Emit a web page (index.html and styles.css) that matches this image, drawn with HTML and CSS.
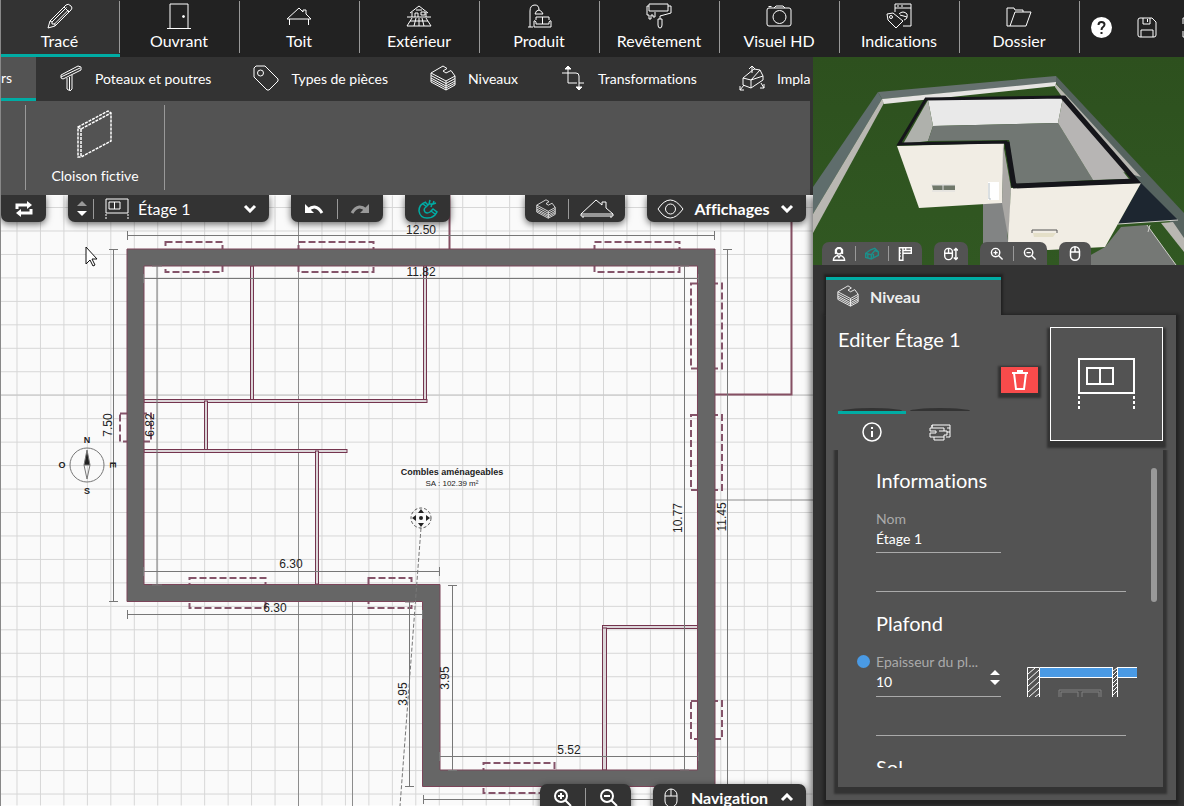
FILE: index.html
```html
<!DOCTYPE html>
<html lang="fr">
<head>
  <meta charset="UTF-8" />
  <meta name="viewport" content="width=device-width, initial-scale=1.0" />
  <title>Plan - Étage 1</title>
  <link rel="stylesheet" href="styles.css">
</head>
<body>
  <!-- shared icons -->
  <svg class="sprite" aria-hidden="true">
    <symbol id="i-levels" viewBox="0 0 26 26">
      <path d="M1 8L13 1L17 3.500L13 6L16 8L21 5.500L25 11V20L16 25L1 17ZM1 8L16 16L25 11M16 16V25M1 10.500L16 18.500L25 13.500M1 13L16 21L25 16M1 15L16 23L25 18" />
    </symbol>
    <symbol id="i-floor" viewBox="0 0 24 22">
      <path d="M1 1H23V15H1ZM4 4H15V11H4ZM9.500 4V11" />
      <path d="M1 16V22M23 16V22" stroke-dasharray="2 1" />
    </symbol>
    <symbol id="i-mouse" viewBox="0 0 16 20">
      <rect x="2" y="1" width="12" height="18" rx="6" />
      <path d="M2 8H14M8 1V8" />
    </symbol>
    <symbol id="i-zoom-in" viewBox="0 0 20 20">
      <circle cx="8" cy="8" r="6" />
      <path d="M12.500 12.500L18 18M5 8H11M8 5V11" />
    </symbol>
    <symbol id="i-zoom-out" viewBox="0 0 20 20">
      <circle cx="8" cy="8" r="6" />
      <path d="M12.500 12.500L18 18M5 8H11" />
    </symbol>
  </svg>

  <header class="topbar">
    <nav class="tabs">
      <button class="tab active">
        <svg width="26" height="26" viewBox="0 0 26 26"><path d="M1 25L3 18L19 2Q21 0 24 3Q26 5 24 7L8 23ZM3 18L5 19L5 21L8 21L8 23M17 4L22 9M5 19L19.500 4.500M7.500 21L21.500 7" /></svg>
        Tracé
      </button>
      <button class="tab">
        <svg width="26" height="26" viewBox="0 0 26 26"><path d="M4 25V1H22V25M1 25.500H25" /><circle cx="17.500" cy="13.500" r="1" fill="#fff" /></svg>
        Ouvrant
      </button>
      <button class="tab">
        <svg width="26" height="26" viewBox="0 0 26 26"><path d="M1 16L13 5L17 9V7H20V11L25 16H1M3.500 16V22M22.500 16V22" /></svg>
        Toit
      </button>
      <button class="tab">
        <svg width="26" height="26" viewBox="0 0 26 26"><path d="M4 10L13 3L22 10M6 9V14M20 9V14M1 14H25M9 14V10H12V14M15 9H19V12H15ZM10 7H16M6 15L1 23H25L20 15M10 15L8 23M13 15V23M16 15L18 23M4 18H22" /></svg>
        Extérieur
      </button>
      <button class="tab">
        <svg width="26" height="26" viewBox="0 0 26 26"><path d="M4 24V8Q4 2 9 2Q13 2 13 7M2 24H7M9 11Q10 7 13 7Q16 8 17 11ZM8 18V24H25V18Q24 17 23 19V21H10V19Q9 17 8 18M10 17V14H23V17M16.500 14V21" /></svg>
        Produit
      </button>
      <button class="tab">
        <svg width="26" height="26" viewBox="0 0 26 26"><path d="M3 1H22V8H3ZM3 3H1V12H3V16H5V12H7V14H9V9M22 3H25V10L14 13V16M12 16H16V22Q16 25 14 25Q12 25 12 22Z" /></svg>
        Revêtement
      </button>
      <button class="tab">
        <svg width="26" height="26" viewBox="0 0 26 26"><rect x="1" y="5" width="24" height="18" rx="2" /><path d="M8 5L10 3H17L19 5M2.500 3.500H5.500" /><circle cx="13.500" cy="14" r="6.500" /></svg>
        Visuel HD
      </button>
      <button class="tab">
        <svg width="26" height="26" viewBox="0 0 26 26"><path d="M9 9V1H25V23H17M9 5H25M11 3H13M15 3H17M1 11L7 10L17 18L10 25L2 17Z" /><circle cx="5" cy="14" r="1.500" /><path d="M13 11Q17 7 21 11Q22 16 18 17M14 12L21 14" /></svg>
        Indications
      </button>
      <button class="tab">
        <svg width="26" height="26" viewBox="0 0 26 26"><path d="M4 23H1V5H8L9 7H17V9M4 23H20L25 9H9L4 23Z" /></svg>
        Dossier
      </button>
    </nav>
    <div class="tools">
      <button aria-label="Aide"><svg width="21" height="21" viewBox="0 0 21 21"><circle cx="10.500" cy="10.500" r="10.500" fill="#fff" stroke="none" /><path d="M7.500 8Q7.500 5 10.500 5Q13.500 5 13.500 7.500Q13.500 9 12 10Q10.500 11 10.500 13M10.500 15V17" stroke="#222" stroke-width="2" /></svg></button>
      <button aria-label="Enregistrer"><svg width="20" height="21" viewBox="0 0 20 21"><path d="M1 3Q1 1 3 1H15L19 5V18Q19 20 17 20H3Q1 20 1 18ZM6 1V7H13V1M10.500 2V5M4 20V13H16V20" /></svg></button>
      <button aria-label="Plein écran"><svg width="21" height="21" viewBox="0 0 21 21"><path d="M7 1H1V7M1 14V20H7M14 1H20V7M20 14V20H14" /></svg></button>
    </div>
  </header>

  <div class="workspace">
    <main class="editor">
      <nav class="subnav">
        <button class="sub active">rs</button>
        <button class="sub">
          <svg width="26" height="26" viewBox="0 0 26 26"><path d="M4 10L21 1L24 2V5L6 14L4 13ZM4 12L23 3M10 13V24L13 26L15 24V10M12.500 12V25" /></svg>
          Poteaux et poutres
        </button>
        <button class="sub">
          <svg width="26" height="26" viewBox="0 0 26 26"><path d="M1 3L3 1L12 1L25 14V16L16 25H14L1 12Z" /><circle cx="7.500" cy="8" r="3" /></svg>
          Types de pièces
        </button>
        <button class="sub">
          <svg width="26" height="26"><use href="#i-levels" /></svg>
          Niveaux
        </button>
        <button class="sub">
          <svg width="26" height="26" viewBox="0 0 26 26"><path d="M8 1V18H17M2 8H16Q19 8 19 11V24M19 18H24" /><path d="M5 4L8 1L11 4ZM16 22L19 25L22 22Z" fill="#fff" /></svg>
          Transformations
        </button>
        <button class="sub">
          <svg width="26" height="26" viewBox="0 0 26 26"><path d="M4 13L15 4L21 5L24 11V15L12 23L4 20ZM4 13L12 15V23M12 15L21 5M12 15L24 11M13 8V1M10 4L13 1L16 4M5 20L1 25M1 21V25H5M22 18L25 23M25 19V23H21" /></svg>
          Impla
        </button>
      </nav>

      <div class="ribbon">
        <button class="ribbon-item">
          <svg width="36" height="48" viewBox="0 0 36 48"><path d="M1 17L31 1L34 3V31L4 47H1ZM1 17L4 19L34 3M4 19V47" stroke-width="1.500" stroke-dasharray="3 1" /></svg>
          Cloison fictive
        </button>
      </div>

      <section class="canvas">
        <svg class="plan" viewBox="1 195 812 611" preserveAspectRatio="xMinYMin slice">
          <defs>
            <pattern id="grid" x="16.500" y="230.500" width="23.460" height="23.460" patternUnits="userSpaceOnUse">
              <path d="M0 0H24M0 0V24" stroke="#d6d6d6" stroke-width="2" />
            </pattern>
          </defs>
          <rect x="0" y="195" width="813" height="611" fill="#fafafa" />
          <rect x="0" y="195" width="813" height="611" fill="url(#grid)" />
          <g class="axes">
            <path d="M298.500 195V806M352.500 602V806M715 500H813" />
            <path d="M0 395H813" stroke="#c4c4c4" />
          </g>
          <path class="lot" d="M449.500 195V249M791.500 195V394.500H715" />

          <!-- openings, hidden in part by the walls -->
          <g class="openings">
            <rect x="165.500" y="242" width="57" height="30" />
            <rect x="298.500" y="242" width="75" height="30" />
            <rect x="594.500" y="242" width="85" height="30" />
            <rect x="691" y="283.500" width="31" height="85" />
            <rect x="691" y="415" width="31" height="75" />
            <rect x="691" y="701" width="31" height="38" />
            <rect x="189.500" y="578" width="76" height="30" />
            <rect x="368.500" y="578" width="43" height="30" />
            <rect x="483.500" y="763" width="71" height="30" />
            <rect x="120" y="413.500" width="31" height="28" />
          </g>

          <g class="partitions">
            <rect x="250.500" y="266" width="3" height="135" />
            <rect x="423.500" y="266" width="3" height="135" />
            <rect x="144" y="399.500" width="283" height="3" />
            <rect x="204.500" y="401" width="3" height="50" />
            <rect x="144" y="449.500" width="203" height="3" />
            <rect x="315.500" y="451" width="3" height="133" />
            <rect x="602.500" y="625.500" width="96" height="3" />
            <rect x="602.500" y="628" width="4" height="142" />
          </g>

          <path class="walls" fill-rule="evenodd" d="M127 249H715V786.500H422.500V601.500H127ZM144 266V584.500H440V770H697.500V266Z" />

          <g class="dims">
            <path d="M127.500 231V240M127 235.500H715M714.500 231V240" />
            <path d="M143.500 274V283M144 278.500H698M698.500 274V283" />
            <path d="M109 249.500H118M113.500 249V601M109 601.500H118" />
            <path d="M152 266H162M157 266V585M152 585H162" />
            <path d="M143.500 567V576M144 571.500H439M439.500 567V576" />
            <path d="M127.500 610V619M127 614.500H422M422.500 610V619" />
            <path d="M448 585.500H457M452.500 585V770M448 770.500H457" />
            <path d="M405 602H414M409.500 602V786M405 786.500H414" />
            <path d="M680 266H689M684.500 266V770M680 770H689" />
            <path d="M723 249.500H732M727.500 249V806" />
            <path d="M439.500 752V761M439 756.500H698M698.500 752V761" />
            <path d="M423.500 795V804M423 799.500H715" />
          </g>
          <path d="M421 528L400 806" stroke="#777" stroke-dasharray="4 2" />

          <g class="measure">
            <text x="421" y="234">12.50</text>
            <text x="421" y="276">11.82</text>
            <text x="291" y="568">6.30</text>
            <text x="275" y="612">6.30</text>
            <text x="569" y="754">5.52</text>
            <text transform="translate(112 425) rotate(-90)">7.50</text>
            <text transform="translate(154 425) rotate(-90)">6.82</text>
            <text transform="translate(682 518) rotate(-90)">10.77</text>
            <text transform="translate(726 517) rotate(-90)">11.45</text>
            <text transform="translate(449 678) rotate(-90)">3.95</text>
            <text transform="translate(407 694) rotate(-90)">3.95</text>
          </g>
          <text class="room" x="452" y="475">Combles aménageables</text>
          <text class="area" x="452" y="486">SA : 102.39 m²</text>

          <g class="move">
            <circle cx="421" cy="518" r="10" fill="none" stroke="#555" stroke-dasharray="3 2" />
            <circle cx="421" cy="518" r="2" />
            <path d="M421 509L424 513H418ZM421 527L424 523H418ZM412 518L416 515V521ZM430 518L426 515V521Z" />
          </g>

          <g class="compass">
            <circle cx="87" cy="465" r="17" />
            <path d="M87 450L90 465H84Z" fill="#222" />
            <path d="M84 465L87 479L90 465" />
            <text x="87" y="443">N</text>
            <text x="87" y="494">S</text>
            <text x="62" y="468">O</text>
            <text transform="translate(110 465) rotate(90)">E</text>
          </g>
          <path d="M86 247V264L90 260L93 266L95 265L92 259H97Z" fill="#fff" stroke="#111" />
        </svg>

        <div class="bar bar-top">
          <div class="group swap">
            <button aria-label="Inverser"><svg width="18" height="18" viewBox="0 0 18 18" class="bold"><path d="M2 9V5H13M16 9V13H5" /><path d="M12 1L17 5L12 9ZM6 9L1 13L6 17Z" fill="#fff" stroke="none" /></svg></button>
          </div>
          <div class="group level">
            <button class="updown" aria-label="Changer de niveau"><svg width="10" height="17" viewBox="0 0 10 17"><path d="M0 6L5 1L10 6Z" fill="#999" stroke="none" /><path d="M0 11L5 16L10 11Z" fill="#fff" stroke="none" /></svg></button>
            <i class="sep"></i>
            <svg width="24" height="22"><use href="#i-floor" /></svg>
            <select aria-label="Niveau"><option>Étage 1</option></select>
            <svg class="chevron" width="14" height="9" viewBox="0 0 14 9"><path d="M2 2L7 7L12 2" /></svg>
          </div>
          <div class="group history">
            <button aria-label="Annuler"><svg width="20" height="12" viewBox="0 0 20 12"><path d="M4 7Q12 0 18 10" fill="none" stroke-width="3" /><path d="M1 1V10H10Z" fill="#fff" stroke="none" /></svg></button>
            <i class="sep"></i>
            <button aria-label="Rétablir" class="off"><svg width="20" height="12" viewBox="0 0 20 12"><path d="M16 7Q8 0 2 10" fill="none" stroke-width="3" /><path d="M19 1V10H10Z" fill="#fff" stroke="none" /></svg></button>
          </div>
          <div class="group magnet">
            <button aria-label="Magnétisme"><svg width="20" height="20" viewBox="0 0 20 20"><path d="M8 3Q1 5 1 12Q2 19 9 19Q14 19 17 16L19 13L15 10L12 13Q9 15 7 13Q5 10 8 8L10 6L7 3M5 5L9 8M13 12L17 15M12 1L11 5H14L13 8M16 2L15 5L18 4" /></svg></button>
          </div>
          <div class="group views">
            <button aria-label="Niveaux"><svg width="20" height="20"><use href="#i-levels" /></svg></button>
            <i class="sep"></i>
            <button aria-label="Toiture"><svg width="34" height="20" viewBox="0 0 34 20"><path d="M1 15L16 1L22 6V3H26V9L33 15V17H1V15H33M3 17V19M31 17V19" /></svg></button>
          </div>
          <button class="group menu">
            <svg width="27" height="20" viewBox="0 0 27 20"><path d="M1 10Q13 -8 26 10Q13 28 1 10Z" /><circle cx="13.500" cy="10" r="5" /></svg>
            Affichages
            <svg class="chevron" width="14" height="9" viewBox="0 0 14 9"><path d="M2 2L7 7L12 2" /></svg>
          </button>
        </div>

        <div class="bar bar-bottom">
          <div class="group zoom">
            <button aria-label="Zoom avant"><svg width="20" height="20"><use href="#i-zoom-in" /></svg></button>
            <i class="sep"></i>
            <button aria-label="Zoom arrière"><svg width="20" height="20"><use href="#i-zoom-out" /></svg></button>
          </div>
          <button class="group menu navigation">
            <svg width="16" height="20"><use href="#i-mouse" /></svg>
            Navigation
            <svg class="chevron" width="14" height="9" viewBox="0 0 14 9"><path d="M2 7L7 2L12 7" /></svg>
          </button>
        </div>
      </section>
    </main>

    <aside class="side">
      <section class="view3d">
        <svg class="scene" viewBox="0 0 371 208" preserveAspectRatio="xMidYMin slice">
          <defs>
            <linearGradient id="grass" x1="0" y1="0" x2="0" y2="1">
              <stop offset="0" stop-color="#2d501e" />
              <stop offset="1" stop-color="#315822" />
            </linearGradient>
          </defs>
          <rect width="371" height="208" fill="url(#grass)" />
          <!-- fence -->
          <path d="M65 35L0 130V157L69 42Z" fill="#5f6d6c" />
          <path d="M69 42L0 157V176L71 46Z" fill="#b9b7b2" />
          <path d="M65 35L243 19V26L69 42Z" fill="#66716f" />
          <path d="M69 42L243 25V29L71 47Z" fill="#e6e4e2" />
          <path d="M243 19L371 156V182L243 26Z" fill="#56635f" />
          <path d="M242 26L328 120L300 112L242 30Z" fill="#b7b6b0" />
          <path d="M348 166L360 165L371 181V195Z" fill="#b9b7b2" />
          <!-- terrace and porch roof -->
          <path d="M308 170L334 168L363 208H260L292 190Z" fill="#757875" />
          <path d="M328 126L365 163L305 167Z" fill="#1d2630" />
          <path d="M365 163L305 167M337 168L335 175M334 168L363 208" fill="none" stroke="#cfcfca" />
          <path d="M170 146H192L197 208H170Z" fill="#828484" />
          <!-- house -->
          <path d="M84 89L191 86L189 146L106 151Z" fill="#f1ede4" />
          <path d="M190 86L198 131L196 185L189 146Z" fill="#a9a7a4" />
          <path d="M198 131L328 126L292 190L235 193L195 185Z" fill="#f1ede4" />
          <path d="M115 43L250 40L245 66L120 69Z" fill="#e9e9e9" />
          <path d="M115 43L120 69L115 84L90 87Z" fill="#afb1ac" />
          <path d="M120 69L245 66L280 123L202 127L196 83L115 84Z" fill="#717773" />
          <path d="M250 40L316 122L280 123L245 66Z" fill="#b7b5b4" />
          <path d="M86 87L113 42L250 40L323 124L200 129L193 85Z" fill="none" stroke="#15151a" stroke-width="3" />
          <path d="M194 85L201 129M250 40L323 124L200 129" fill="none" stroke="#15151a" stroke-width="5" />
          <path d="M119 128H142V133H120Z" fill="#70786a" />
          <path d="M118 128H142M119 134H142M130 127V134" stroke="#ddd" fill="none" />
          <path d="M175 125H186V143H175Z" fill="#fff" />
          <path d="M176 126V142H178" fill="none" stroke="#b5bfc4" />
          <path d="M219 176V173H244V176" fill="none" stroke="#555" />
          <path d="M220 176H243L240 180H221Z" fill="#e4dfc8" />
        </svg>
        <div class="bar3d">
          <div class="group3d">
            <button aria-label="Visite"><svg width="14" height="14" viewBox="0 0 20 20"><circle cx="10" cy="6" r="4" /><path d="M5 10V4Q10 -3 15 4V10M2 19Q2 14 8 12L10 15L12 12Q18 14 18 19Z" /></svg></button>
            <i class="sep"></i>
            <button aria-label="Vue 3D" class="on"><svg width="14" height="14" viewBox="0 0 20 20"><path d="M1 9L8 4L14 2L19 7V12L9 17L1 15ZM1 9L9 11V17M9 11L14 5L19 7M12 16V10M4 10V15" /></svg></button>
            <i class="sep"></i>
            <button aria-label="Vue 2D"><svg width="14" height="14" viewBox="0 0 20 20"><path d="M2 1H7V19H2ZM7 1H19V9H7M11 1V5H19M7 5H11M2 5H4M2 9H4M2 13H4" /></svg></button>
          </div>
          <div class="group3d">
            <button aria-label="Hauteur"><svg width="14" height="14" viewBox="0 0 20 20"><rect x="1" y="2" width="11" height="16" rx="5" /><path d="M1 9H12M6.500 2V9M17 2V18M14 5L17 2L20 5M14 15L17 18L20 15" /></svg></button>
          </div>
          <div class="group3d">
            <button aria-label="Zoom avant"><svg width="14" height="14"><use href="#i-zoom-in" /></svg></button>
            <i class="sep"></i>
            <button aria-label="Zoom arrière"><svg width="14" height="14"><use href="#i-zoom-out" /></svg></button>
          </div>
          <div class="group3d">
            <button aria-label="Souris"><svg width="12" height="15"><use href="#i-mouse" /></svg></button>
          </div>
        </div>
      </section>

      <section class="panel">
        <h1 class="panel-tab"><svg width="22" height="22"><use href="#i-levels" /></svg>Niveau</h1>
        <div class="panel-body">
          <div class="panel-head">
            <div class="head-left">
              <h2>Editer Étage 1</h2>
              <button class="delete" aria-label="Supprimer"><svg width="18" height="20" viewBox="0 0 18 20"><path d="M1 3H17M6 1H12M3 3L5 19H13L15 3" /></svg></button>
              <div class="prop-tabs">
                <button class="active" aria-label="Informations"><svg width="20" height="20" viewBox="0 0 20 20"><circle cx="10" cy="10" r="9" stroke-width="1.500" /><path d="M10 9V15M10 5V7" stroke-width="2" /></svg></button>
                <button aria-label="Structure"><svg width="22" height="18" viewBox="0 0 22 18"><path d="M3 4V2H21V14H17M1 5H15V8H18V12H15V14H1V10H5M1 5V8H7V10H5M10 8H15M5 14V17H15V14M3 2V5M18 5H21M18 9H21" /></svg></button>
              </div>
            </div>
            <div class="thumb"><svg width="58" height="52" viewBox="0 0 58 52"><path d="M1 1H56V35H1ZM9 10H35V26H9ZM22 10V26" /><path d="M1 38V52M56 38V52" stroke-dasharray="3 2" /></svg></div>
          </div>

          <div class="props">
            <form class="fields">
              <h3>Informations</h3>
              <div class="field">
                <label for="nom">Nom</label>
                <input id="nom" type="text" value="Étage 1">
              </div>
              <hr>
              <h3>Plafond</h3>
              <div class="row">
                <div class="field marked">
                  <label for="plafond">Epaisseur du pl...</label>
                  <input id="plafond" type="number" value="10">
                  <svg class="spin" width="12" height="17" viewBox="0 0 12 17"><path d="M1 6L6 1L11 6ZM1 11L6 16L11 11Z" fill="#fff" stroke="none" /></svg>
                </div>
                <svg class="ceiling" width="110" height="30" viewBox="0 0 110 30">
                  <path d="M13 1H110V10H13Z" fill="#4a9ae4" stroke="none" />
                  <path d="M13 .500H110M13 10.500H110" />
                  <path d="M0.500 30V.500H12.500V30M1 7L8 1M1 13L12 3M1 19L12 9M1 25L12 15M2 30L12 21M8 30L12 27" />
                  <path d="M85 0H91V30H85Z" fill="#535353" stroke="none" />
                  <path d="M85.500 30V0M90.500 30V0M86 4L90 1M86 8L90 4M86 12L90 8M86 16L90 12M86 20L90 16M86 24L90 20M86 28L90 24" />
                  <path d="M32 30V23H74V30M34 30V25H51V30M55 30V25H72V30" stroke="#808080" />
                </svg>
              </div>
              <hr>
              <h3>Sol</h3>
            </form>
            <i class="scroll-thumb"></i>
          </div>
        </div>
      </section>
    </aside>
  </div>
</body>
</html>
```
FILE: styles.css
```css
* {
  box-sizing: border-box;
}
body {
  margin: 0;
  height: 100vh;
  display: flex;
  flex-direction: column;
  overflow: hidden;
  background: #333;
  color: #fff;
  font-family: Lato, sans-serif;
  font-size: 14px;
  font-variant-ligatures: no-common-ligatures;
  border-left: 1px solid #888;
}
button, input, select {
  font: inherit;
  font-variant-ligatures: inherit;
  color: inherit;
  background: none;
  border: 0;
  padding: 0;
  margin: 0;
}
button {
  cursor: pointer;
}
svg {
  flex: none;
  display: block;
  fill: none;
  stroke: #fff;
}
h1, h2, h3 {
  margin: 0;
  font-weight: 400;
}
.sprite {
  display: none;
}

/* top bar */
.topbar {
  display: flex;
  flex: none;
  height: 57px;
  background: #222;
}
.tabs {
  display: flex;
}
.tab {
  position: relative;
  width: 120px;
  height: 57px;
  padding: 3px 2px 0 0;
  display: flex;
  flex-direction: column;
  align-items: center;
  gap: 2px;
  font-size: 16px;
  line-height: 20px;
}
.tab.active {
  width: 119px;
  background: #333;
  border-bottom: 3px solid #00aca4;
}
.tab::after {
  content: "";
  position: absolute;
  right: 0;
  top: 1px;
  width: 1px;
  height: 52px;
  background: #999;
}
.tools {
  display: flex;
  align-items: center;
  gap: 25px;
  padding: 0 0 3px 11px;
  overflow: hidden;
}

.workspace {
  flex: 1;
  min-height: 0;
  display: flex;
}
.editor {
  flex: 1;
  min-width: 0;
  display: flex;
  flex-direction: column;
}
.subnav {
  display: flex;
  flex: none;
  height: 44px;
  overflow: hidden;
}
.sub {
  display: flex;
  flex: none;
  align-items: center;
  gap: 12px;
  padding: 0 21px 2px;
  white-space: nowrap;
}
.sub.active {
  width: 35px;
  padding: 0;
  background: #535353;
  border-bottom: 3px solid #00aca4;
}
.ribbon {
  flex: none;
  height: 94px;
  margin-right: 3px;
  padding: 4px 0 5px 24px;
  background: #535353;
}
.ribbon-item {
  width: 140px;
  height: 85px;
  display: flex;
  flex-direction: column;
  align-items: center;
  gap: 9px;
  padding-top: 5px;
  border: solid #999;
  border-width: 0 1px;
}

/* drawing area */
.canvas {
  position: relative;
  flex: 1;
  min-height: 0;
  overflow: hidden;
}
.plan {
  width: 100%;
  height: 100%;
}
.axes {
  stroke: #8c8c8c;
}
.lot {
  stroke: #854f63;
  stroke-width: 2;
}
.openings {
  stroke: #85546a;
  stroke-width: 2;
  stroke-dasharray: 7 3;
}
.partitions {
  fill: #dcd6d9;
  stroke: #74344e;
}
.walls {
  fill: #666;
  stroke: #7b4459;
}
.dims {
  stroke: #777;
}
.measure, .compass text, .room, .area {
  font-family: "Liberation Sans", sans-serif;
  font-size: 12px;
  fill: #222;
  stroke: none;
  text-anchor: middle;
}
.plan .room {
  font-size: 9px;
  font-weight: 700;
}
.plan .area {
  font-size: 8px;
}
.move {
  fill: #222;
  stroke: none;
}
.compass {
  stroke: #777;
}
.plan .compass text {
  font-size: 9px;
  font-weight: 700;
}

.bar {
  position: absolute;
  left: 0;
  right: 7px;
  display: flex;
  gap: 22px;
}
.bar-top {
  top: 0;
}
.bar-bottom {
  bottom: -5px;
  justify-content: flex-end;
}
.group {
  display: flex;
  align-items: center;
  justify-content: space-evenly;
  height: 27px;
  background: #333;
  border-radius: 0 0 7px 7px;
  box-shadow: 0 2px 7px rgba(0, 0, 0, .6);
}
.bar-bottom .group {
  border-radius: 7px 7px 0 0;
}
.sep {
  flex: none;
  width: 1px;
  height: 20px;
  background: #999;
}
.swap, .magnet {
  width: 45px;
}
.bold {
  stroke-width: 3;
}
.level {
  width: 201px;
  justify-content: flex-start;
  padding: 0 12px 0 9px;
  font-size: 16px;
}
.level .sep {
  margin: 0 11px 0 6px;
}
.level select {
  flex: 1;
  appearance: none;
  margin-left: 9px;
}
.level option {
  background: #333;
}
.chevron {
  stroke-width: 3;
}
.history {
  width: 92px;
}
.off {
  opacity: .5;
}
.magnet svg {
  stroke: #00aca4;
  stroke-width: 1.5;
}
.views {
  width: 100px;
  margin-left: auto;
}
.menu {
  width: 159px;
  padding: 0 12px 0 10px;
  justify-content: space-between;
  font-size: 16px;
  font-weight: 700;
}
.zoom {
  width: 91px;
  stroke-width: 2;
}
.navigation {
  width: 153px;
}

/* right column */
.side {
  flex: none;
  width: 371px;
  z-index: 1;
  display: flex;
  flex-direction: column;
  background: #333;
  box-shadow: -2px 140px 7px rgba(0, 0, 0, .6);
}
.view3d {
  position: relative;
  flex: none;
  height: 208px;
}
.scene {
  width: 100%;
  height: 100%;
  stroke: none;
}
.bar3d {
  position: absolute;
  left: 9px;
  bottom: 0;
  display: flex;
  gap: 12px;
}
.group3d {
  height: 23px;
  display: flex;
  align-items: center;
  gap: 9px;
  padding: 0 10px;
  background: #535353;
  border-radius: 7px 7px 0 0;
  stroke-width: 2;
}
.group3d .sep {
  height: 15px;
}
.on svg {
  stroke: #1c8f8a;
}

.panel {
  flex: 1;
  min-height: 0;
  display: flex;
  flex-direction: column;
  padding: 12px 8px 6px 13px;
}
.panel-tab {
  position: relative;
  z-index: 1;
  display: flex;
  align-items: center;
  gap: 11px;
  width: 175px;
  height: 38px;
  padding: 0 0 3px 11px;
  background: #535353;
  border-top: 3px solid #00aca4;
  box-shadow: 0 -1px 2px 2px #222;
  clip-path: inset(-6px -6px 0 -6px);
  font-size: 16px;
  font-weight: 700;
  color: #eee;
}
.panel-body {
  flex: 1;
  min-height: 0;
  display: flex;
  flex-direction: column;
  padding: 12px 13px 13px 12px;
  background: #535353;
  box-shadow: 0 2px 3px 3px #222;
}
.panel-head {
  display: flex;
  justify-content: space-between;
  height: 123px;
}
.head-left {
  width: 200px;
  display: flex;
  flex-direction: column;
}
h2, h3 {
  font-size: 20px;
  line-height: 24px;
}
.delete {
  align-self: flex-end;
  width: 37px;
  height: 26px;
  margin-top: 16px;
  display: flex;
  justify-content: center;
  align-items: center;
  background: #f94b4b;
  box-shadow: 0 2px 2px 3px #333;
  stroke-width: 2;
}
.prop-tabs {
  display: flex;
  margin-top: 18px;
}
.prop-tabs button {
  position: relative;
  width: 68px;
  height: 39px;
  display: flex;
  align-items: center;
  justify-content: center;
  border-top: 3px solid transparent;
}
.prop-tabs button::before {
  content: "";
  position: absolute;
  left: 4px;
  right: 4px;
  top: -6px;
  height: 3px;
  background: #333;
  border-radius: 50% 50% 0 0 / 100% 100% 0 0;
}
.prop-tabs .active {
  border-top-color: #00aca4;
}
.thumb {
  width: 113px;
  height: 114px;
  display: flex;
  align-items: center;
  justify-content: center;
  border: 1px solid #fff;
  box-shadow: 0 4px 2px 3px #333;
  stroke-width: 2;
}
.props {
  position: relative;
  flex: 1;
  min-height: 0;
  padding: 18px 0 19px;
  box-shadow: 0 3px 2px 4px #333;
  clip-path: inset(0 -8px -12px -8px);
}
.fields {
  height: 100%;
  overflow: hidden;
  padding: 0 37px 0 38px;
}
.field {
  position: relative;
  width: 125px;
  margin-top: 18px;
  border-bottom: 1px solid #aaa;
}
.field label {
  display: block;
  line-height: 18px;
  color: #aaa;
  white-space: nowrap;
}
.field input {
  display: block;
  width: 100%;
  height: 20px;
  margin-bottom: 4px;
  outline: none;
  appearance: textfield;
}
.field input::-webkit-inner-spin-button {
  display: none;
}
.marked::before {
  content: "";
  position: absolute;
  left: -19px;
  top: 2px;
  width: 13px;
  height: 13px;
  border-radius: 50%;
  background: #4a9ae4;
}
.spin {
  position: absolute;
  right: 0;
  top: 16px;
}
.row {
  display: flex;
  gap: 26px;
}
.ceiling {
  margin: 32px -11px 0 0;
}
hr {
  margin: 38px 0 19px;
  border: 0;
  border-top: 1px solid #aaa;
}
.scroll-thumb {
  position: absolute;
  right: 6px;
  top: 18px;
  width: 6px;
  height: 134px;
  border-radius: 3px;
  background: #999;
}
```
